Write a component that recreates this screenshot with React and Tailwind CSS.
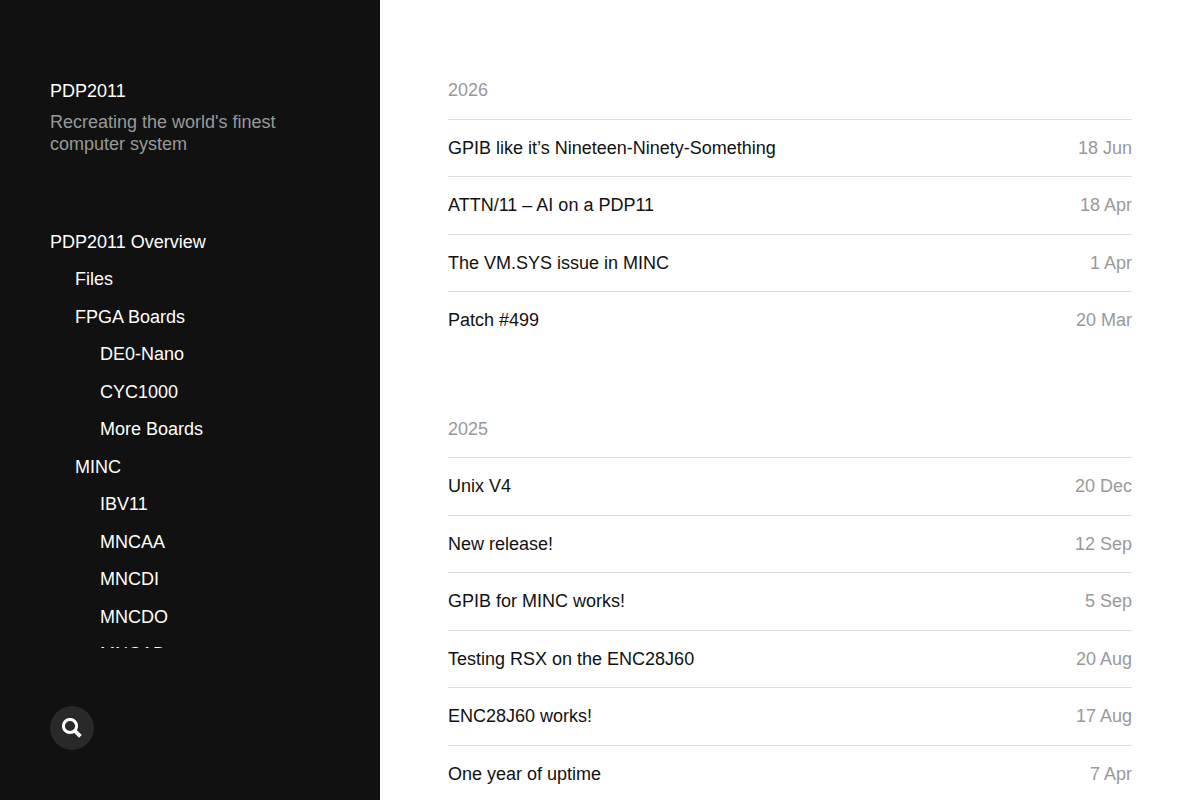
import React from 'react';

const pages = [
  { title: 'PDP2011 Overview', level: 0 },
  { title: 'Files', level: 1 },
  { title: 'FPGA Boards', level: 1 },
  { title: 'DE0-Nano', level: 2 },
  { title: 'CYC1000', level: 2 },
  { title: 'More Boards', level: 2 },
  { title: 'MINC', level: 1 },
  { title: 'IBV11', level: 2 },
  { title: 'MNCAA', level: 2 },
  { title: 'MNCDI', level: 2 },
  { title: 'MNCDO', level: 2 },
  { title: 'MNCAD', level: 2 },
];

const indent = ['pl-0', 'pl-[25px]', 'pl-[50px]'];

const archive = [
  {
    year: '2026',
    posts: [
      { title: 'GPIB like it’s Nineteen-Ninety-Something', date: '18 Jun' },
      { title: 'ATTN/11 – AI on a PDP11', date: '18 Apr' },
      { title: 'The VM.SYS issue in MINC', date: '1 Apr' },
      { title: 'Patch #499', date: '20 Mar' },
    ],
  },
  {
    year: '2025',
    posts: [
      { title: 'Unix V4', date: '20 Dec' },
      { title: 'New release!', date: '12 Sep' },
      { title: 'GPIB for MINC works!', date: '5 Sep' },
      { title: 'Testing RSX on the ENC28J60', date: '20 Aug' },
      { title: 'ENC28J60 works!', date: '17 Aug' },
      { title: 'One year of uptime', date: '7 Apr' },
    ],
  },
];

function Sidebar() {
  return (
    <header className="sticky top-0 flex h-screen w-[380px] shrink-0 flex-col bg-[#111] px-[50px] pt-20 pb-[50px] text-white">
      <h1>
        <a href="/">PDP2011</a>
      </h1>
      <p className="mt-2 text-[#999]">
        Recreating the world's finest computer system
      </p>

      {/* Pages */}
      <nav className="mt-[75px] min-h-0 flex-1 overflow-y-auto [scrollbar-width:none]">
        <ul className="flex flex-col gap-[15px]">
          {pages.map((page) => (
            <li key={page.title} className={indent[page.level]}>
              <a href="/" className="hover:underline">
                {page.title}
              </a>
            </li>
          ))}
        </ul>
      </nav>

      {/* Search */}
      <button
        type="button"
        aria-label="Search"
        className="mt-[58px] flex size-11 shrink-0 items-center justify-center rounded-full bg-[#292929]"
      >
        <svg viewBox="0 0 20 20" className="size-5" fill="none" stroke="currentColor">
          <circle cx="8" cy="8" r="6.6" strokeWidth="3" />
          <path d="M12.2 12.2L18.4 18.4" strokeWidth="3.8" />
        </svg>
      </button>
    </header>
  );
}

export default function App() {
  return (
    <div className="flex min-h-screen bg-white font-['Liberation_Sans',Arial,sans-serif] text-lg leading-tight text-[#111]">
      <Sidebar />

      <main className="flex min-w-0 flex-1 flex-col gap-[69px] px-[68px] pt-[79px]">
        {archive.map((group) => (
          <section key={group.year}>
            <h2 className="pb-[17px] text-[#999]">{group.year}</h2>
            <ul>
              {group.posts.map((post) => (
                <li key={post.title} className="border-t border-[#ddd]">
                  <a href="/" className="flex justify-between gap-6 py-[17px]">
                    <span>{post.title}</span>
                    <time className="shrink-0 text-[#999]">{post.date}</time>
                  </a>
                </li>
              ))}
            </ul>
          </section>
        ))}
      </main>
    </div>
  );
}
